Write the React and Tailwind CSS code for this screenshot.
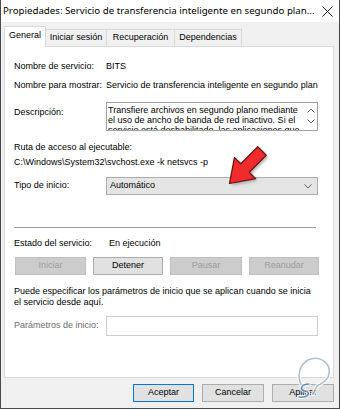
import React from 'react';

function Chevron({ up = false }) {
  return (
    <svg width="8" height="5" viewBox="0 0 8 5" className="block">
      <path d={up ? 'M0.5 4.5 L4 1 L7.5 4.5' : 'M0.5 0.5 L4 4 L7.5 0.5'} fill="none" stroke="#606060" strokeWidth="1" />
    </svg>
  );
}

function Button({ children, disabled = false, primary = false, w = 'w-[70px]' }) {
  const look = disabled
    ? 'bg-[#cccccc] border-[#bfbfbf] text-[#9d9d9d]'
    : primary
      ? 'bg-[#e1e1e1] border-[#0078d7] text-black'
      : 'bg-[#e1e1e1] border-[#adadad] text-black';
  return (
    <div className={`${w} h-[18px] border flex items-center justify-center ${look}`}>
      {children}
    </div>
  );
}

function Row({ label, children, className = '' }) {
  return (
    <div className={`flex items-center h-[12px] leading-[12px] ${className}`}>
      <span className="w-[92px] shrink-0">{label}</span>
      <span>{children}</span>
    </div>
  );
}

export default function App() {
  return (
    <div className="relative w-[340px] h-[409px] overflow-hidden bg-[#f0f0f0] border-x border-b border-[#4a4a4a] font-['Liberation_Sans',Arial,sans-serif] text-[9px] text-black">
      {/* barra de titulo */}
      <div className="h-[22px] bg-white flex items-center justify-between pl-[2px] pr-[6px]">
        <span className="font-['Noto_Sans',sans-serif] text-[9.7px] whitespace-nowrap">
          Propiedades: Servicio de transferencia inteligente en segundo plan...
        </span>
        <svg width="11" height="11" viewBox="0 0 11 11" className="shrink-0">
          <path d="M0.5 0.5 L10.5 10.5 M10.5 0.5 L0.5 10.5" stroke="#222" strokeWidth="1" />
        </svg>
      </div>

      {/* pestañas */}
      <div className="flex items-end pl-[3px] mt-[4px] -mb-px relative z-10">
        <div className="w-[42px] h-[21px] bg-white border-x border-t border-[#d9d9d9] flex items-center justify-center pb-[2px]">
          General
        </div>
        <div className="w-[61px] h-[17px] mb-px bg-[#f0f0f0] border-r border-t border-[#d9d9d9] flex items-center justify-center">
          Iniciar sesión
        </div>
        <div className="w-[68px] h-[17px] mb-px bg-[#f0f0f0] border-r border-t border-[#d9d9d9] flex items-center justify-center">
          Recuperación
        </div>
        <div className="w-[67px] h-[17px] mb-px bg-[#f0f0f0] border-r border-t border-[#d9d9d9] flex items-center justify-center">
          Dependencias
        </div>
      </div>

      {/* panel General */}
      <div className="ml-[3px] w-[330px] h-[332px] bg-white border border-[#d9d9d9] pl-[9px] flex flex-col">
        <Row label="Nombre de servicio:" className="mt-[13px]">BITS</Row>
        <Row label="Nombre para mostrar:" className="mt-[7px]">
          Servicio de transferencia inteligente en segundo plan
        </Row>

        <div className="flex mt-[11px]">
          <span className="w-[92px] shrink-0 pt-[4px] leading-[12px]">Descripción:</span>
          <div className="w-[212px] h-[29px] border border-[#a0a0a0] overflow-hidden flex">
            <div className="flex-1 pl-[1px] pt-[2px] leading-[10px]">
              Transfiere archivos en segundo plano mediante el uso de ancho de banda de red inactivo. Si el servicio está deshabilitado, las aplicaciones que
            </div>
            <div className="w-[12px] flex flex-col items-center pt-[5px] gap-[6px]">
              <Chevron up />
              <Chevron />
            </div>
          </div>
        </div>

        <div className="mt-[10px] h-[12px] leading-[12px]">Ruta de acceso al ejecutable:</div>
        <div className="mt-[3px] h-[12px] leading-[12px]">C:\Windows\System32\svchost.exe -k netsvcs -p</div>

        <div className="flex items-center mt-[9px]">
          <span className="w-[92px] shrink-0">Tipo de inicio:</span>
          <div className="w-[212px] h-[18px] bg-[#e5e5e5] border border-[#acacac] flex items-center justify-between pl-[3px] pr-[5px]">
            <span>Automático</span>
            <Chevron />
          </div>
        </div>

        <div className="mt-[32px] w-[302px] h-px bg-[#a0a0a0]" />

        <Row label="Estado del servicio:" className="mt-[9px]">
          <span className="pl-[3px]">En ejecución</span>
        </Row>

        <div className="flex gap-[7px] mt-[8px] pl-[1px]">
          <Button disabled w="w-[71px]">Iniciar</Button>
          <Button>Detener</Button>
          <Button disabled w="w-[72px]">Pausar</Button>
          <Button disabled>Reanudar</Button>
        </div>

        <p className="mt-[11px] leading-[10.5px] w-[300px]">
          Puede especificar los parámetros de inicio que se aplican cuando se inicia el servicio desde aquí.
        </p>

        <div className="flex items-center mt-[9px]">
          <span className="w-[92px] shrink-0 text-[#6d6d6d]">Parámetros de inicio:</span>
          <div className="w-[212px] h-[20px] bg-white border border-[#cccccc]" />
        </div>
      </div>

      {/* botones inferiores */}
      <div className="flex justify-end gap-[8px] pr-[5px] mt-[6px]">
        <Button primary w="w-[61px]">Aceptar</Button>
        <Button w="w-[62px]">Cancelar</Button>
        <Button w="w-[62px]">Aplicar</Button>
      </div>

      {/* flecha roja y marca de agua sobre la captura */}
      <svg className="absolute left-0 top-0 pointer-events-none" width="340" height="409" viewBox="0 0 340 409">
        <defs>
          <filter id="sh" x="-30%" y="-30%" width="160%" height="160%">
            <feGaussianBlur stdDeviation="1.5" />
          </filter>
        </defs>
        <g transform="translate(263,153) rotate(135)">
          <polygon points="0,-6 24,-6 24,-15 46,0 24,15 24,6 0,6" fill="#555" opacity="0.45" filter="url(#sh)" />
        </g>
        <g transform="translate(261,151) rotate(135)">
          <polygon points="0,-6 24,-6 24,-15 46,0 24,15 24,6 0,6" fill="#ef2b2b" stroke="#6b1111" strokeWidth="1.2" strokeLinejoin="round" />
        </g>
        <g fill="none" strokeLinecap="round" strokeLinejoin="round" opacity="0.8">
          <path d="M303 388 C296 382 296 366 307 360 C318 355 330 362 328 374 C327 381 320 384 316 386 L312 394" stroke="#ffffff" strokeWidth="4" />
          <path d="M303 388 C296 382 296 366 307 360 C318 355 330 362 328 374 C327 381 320 384 316 386 L312 394" stroke="#9ab4c6" strokeWidth="1.6" />
          <path d="M308 384 C300 384 298 390 304 391 C310 392 308 398 298 397" stroke="#ffffff" strokeWidth="3.5" />
          <path d="M308 384 C300 384 298 390 304 391 C310 392 308 398 298 397" stroke="#4f7fb8" strokeWidth="1.5" />
        </g>
      </svg>
    </div>
  );
}
